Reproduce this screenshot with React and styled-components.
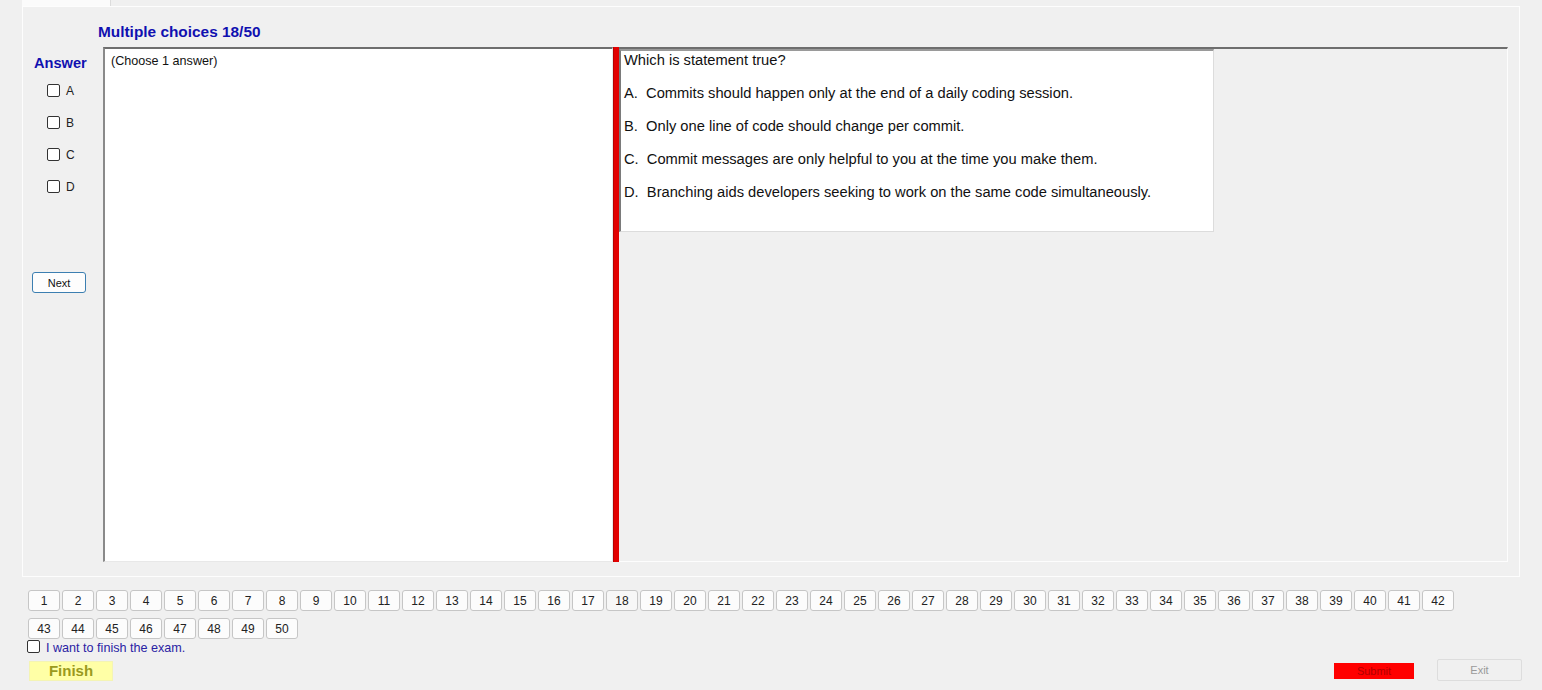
import React from "react";
import styled, { createGlobalStyle } from "styled-components";

const GlobalStyle = createGlobalStyle`
  html, body {
    margin: 0;
    padding: 0;
    background: #f0f0f0;
    font-family: "Liberation Sans", Arial, sans-serif;
    overflow: hidden;
  }
  * { box-sizing: border-box; }
`;

const Page = styled.div`
  width: 1542px;
  height: 690px;
  background: #f0f0f0;
`;

const TabStrip = styled.div`
  height: 6px;
  padding-left: 22px;
`;

const TabHead = styled.div`
  width: 89px;
  height: 6px;
  background: #fbfbfb;
  border-right: 1px solid #dcdcdc;
`;

const TabPanel = styled.div`
  margin-left: 22px;
  width: 1498px;
  height: 571px;
  border: 1px solid #fdfdfd;
  padding: 17px 11px 0 0;
`;

const Title = styled.div`
  margin-left: 75px;
  height: 16px;
  line-height: 16px;
  font-size: 15.4px;
  font-weight: bold;
  color: #1010b0;
`;

const MainRow = styled.div`
  display: flex;
  margin-top: 7px;
  height: 515px;
`;

const Side = styled.div`
  width: 80px;
  flex: none;
  padding-top: 8px;
  display: flex;
  flex-direction: column;
`;

const AnswerLabel = styled.div`
  margin-left: 11px;
  height: 16px;
  line-height: 16px;
  font-size: 14.6px;
  font-weight: bold;
  color: #1010b0;
`;

const OptionList = styled.div`
  margin-top: 13px;
  margin-left: 24px;
  display: flex;
  flex-direction: column;
  gap: 19px;
`;

const Option = styled.label`
  display: flex;
  align-items: center;
  height: 13px;
  gap: 6px;
  font-size: 12px;
  color: #222;
`;

const Box = styled.span`
  width: 13px;
  height: 13px;
  flex: none;
  border: 1px solid #333;
  border-radius: 2px;
  background: #fff;
`;

const NextButton = styled.button`
  margin-top: 79px;
  margin-left: 9px;
  width: 54px;
  height: 21px;
  padding: 0;
  border: 1px solid #3c7fb1;
  border-radius: 3px;
  background: #fdfdfd;
  font-family: "Liberation Sans", Arial, sans-serif;
  font-size: 11px;
  color: #111;
`;

const AnswerBox = styled.div`
  width: 510px;
  flex: none;
  background: #fff;
  border-style: solid;
  border-width: 2px 1px 1px 2px;
  border-color: #6e6e6e #e8e8e8 #e8e8e8 #8a8a8a;
  padding: 5px 6px;
  font-size: 12.6px;
  line-height: 14px;
  color: #111;
`;

const Splitter = styled.div`
  width: 6px;
  flex: none;
  background: #e20000;
  border-left: 1px solid #b80000;
`;

const QuestionPane = styled.div`
  flex: 1;
  border-top: 2px solid #6e6e6e;
  border-right: 1px solid #fdfdfd;
  border-bottom: 1px solid #fdfdfd;
`;

const QuestionBox = styled.div`
  width: 595px;
  height: 183px;
  background: #fff;
  border-style: solid;
  border-width: 2px 1px 1px 2px;
  border-color: #9a9a9a #dcdcdc #dcdcdc #7a7a7a;
  padding: 1px 3px;
  display: flex;
  flex-direction: column;
  gap: 17px;
  font-size: 14.7px;
  line-height: 16px;
  color: #111;
`;

const Line = styled.div`
  white-space: pre;
`;

const NumberGrid = styled.div`
  margin: 13px 0 0 28px;
  display: grid;
  grid-template-columns: repeat(42, 32px);
  column-gap: 2px;
  row-gap: 7px;
`;

const NumButton = styled.button`
  height: 21px;
  padding: 0;
  border: 1px solid #c6c6c6;
  border-radius: 3px;
  background: ${(p) => (p.$current ? "#f7f7f7" : "#fcfcfc")};
  font-family: "Liberation Sans", Arial, sans-serif;
  font-size: 12px;
  color: #222;
`;

const FinishCheck = styled.label`
  display: flex;
  align-items: center;
  gap: 6px;
  margin: 1px 0 0 27px;
  height: 13px;
  font-size: 12.6px;
  color: #2a22a4;
`;

const FinishText = styled.span`
  margin-top: 3px;
`;

const BottomBar = styled.div`
  display: flex;
  align-items: center;
  height: 22px;
  margin-top: 6px;
  padding: 0 20px 0 29px;
`;

const FinishButton = styled.div`
  width: 84px;
  height: 20px;
  margin-top: 2px;
  background: #ffffa6;
  border: 1px solid #f4f4b4;
  color: #9a9a1e;
  font-size: 15px;
  font-weight: bold;
  line-height: 18px;
  text-align: center;
`;

const SubmitButton = styled.div`
  margin-left: auto;
  width: 80px;
  height: 16px;
  margin-top: 2px;
  background: #ff0000;
  color: #b00000;
  font-size: 11px;
  line-height: 16px;
  text-align: center;
`;

const ExitButton = styled.div`
  margin-left: 23px;
  width: 85px;
  height: 22px;
  border: 1px solid #dddddd;
  border-radius: 2px;
  background: #f0f0f0;
  color: #9a9a9a;
  font-size: 11px;
  line-height: 20px;
  text-align: center;
`;

const choices = ["A", "B", "C", "D"];

const statements = [
  "Which is statement true?",
  "A.  Commits should happen only at the end of a daily coding session.",
  "B.  Only one line of code should change per commit.",
  "C.  Commit messages are only helpful to you at the time you make them.",
  "D.  Branching aids developers seeking to work on the same code simultaneously.",
];

export default function App() {
  const numbers = Array.from({ length: 50 }, (_, i) => i + 1);

  return (
    <>
      <GlobalStyle />
      <Page>
        <TabStrip>
          <TabHead />
        </TabStrip>
        <TabPanel>
          <Title>Multiple choices 18/50</Title>
          <MainRow>
            <Side>
              <AnswerLabel>Answer</AnswerLabel>
              <OptionList>
                {choices.map((c) => (
                  <Option key={c}>
                    <Box />
                    {c}
                  </Option>
                ))}
              </OptionList>
              <NextButton>Next</NextButton>
            </Side>
            <AnswerBox>(Choose 1 answer)</AnswerBox>
            <Splitter />
            <QuestionPane>
              <QuestionBox>
                {statements.map((s) => (
                  <Line key={s}>{s}</Line>
                ))}
              </QuestionBox>
            </QuestionPane>
          </MainRow>
        </TabPanel>
        <NumberGrid>
          {numbers.map((n) => (
            <NumButton key={n} $current={n === 18}>
              {n}
            </NumButton>
          ))}
        </NumberGrid>
        <FinishCheck>
          <Box />
          <FinishText>I want to finish the exam.</FinishText>
        </FinishCheck>
        <BottomBar>
          <FinishButton>Finish</FinishButton>
          <SubmitButton>Submit</SubmitButton>
          <ExitButton>Exit</ExitButton>
        </BottomBar>
      </Page>
    </>
  );
}
